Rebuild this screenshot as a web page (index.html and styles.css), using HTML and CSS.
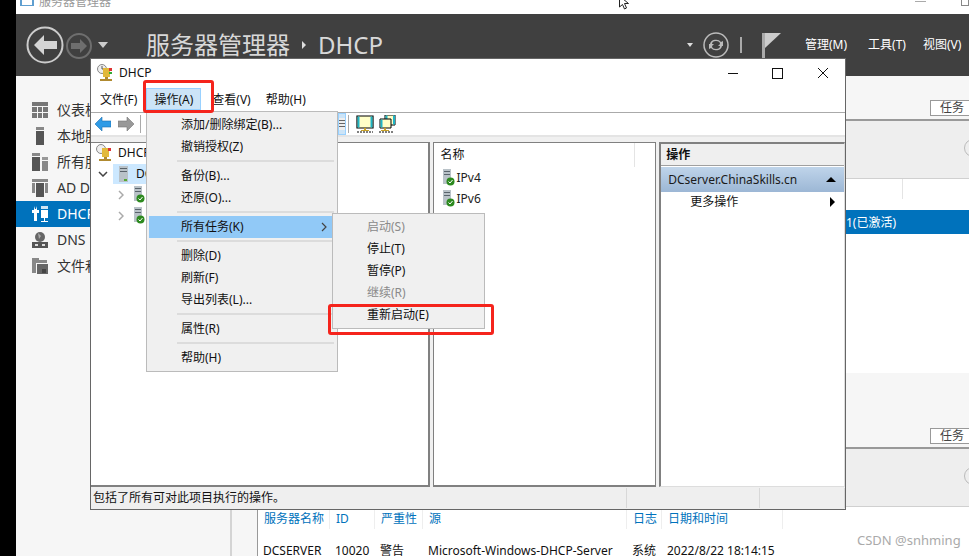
FILE: index.html
```html
<!DOCTYPE html>
<html lang="zh">
<head>
    <meta charset="UTF-8">
    <title>服务器管理器</title>
    <link rel="stylesheet" href="styles.css">
</head>
<body>
    <div class="screen">
        <div class="titlebar">
            <svg class="app-icon" width="16" height="14" viewBox="0 0 16 14"><path d="M1 0h14v10H1z" fill="#5f9fd0"/><path d="M3 3h10v6H3z" fill="#fff"/><path d="M5 1h6v3H5z" fill="#33556f"/></svg>
            <span class="app-name">服务器管理器</span>
            <svg class="cursor" width="14" height="11" viewBox="0 0 14 11"><path d="M1.5-4v11l3-2.5 2 4.5 2-1-2-4.5h4z" fill="#fff" stroke="#222"/></svg>
            <span class="min-line"></span>
            <span class="max-corner"></span>
        </div>

        <header class="header">
            <svg class="nav-back" width="38" height="38" viewBox="0 0 38 38"><circle cx="19" cy="19" r="17.5" fill="none" stroke="#ccc" stroke-width="2"/><path d="M8 19l10-10v6h13v8H18v6z" fill="#d4d4d4"/></svg>
            <svg class="nav-forward" width="26" height="26" viewBox="0 0 26 26"><circle cx="13" cy="13" r="12" fill="none" stroke="#6e6e6e" stroke-width="2"/><path d="M21 13l-7-7v4H5v6h9v4z" fill="#6e6e6e"/></svg>
            <span class="nav-drop"></span>
            <div class="crumb">服务器管理器<span class="crumb-sep"></span>DHCP</div>
            <span class="head-drop"></span>
            <svg class="refresh" width="26" height="26" viewBox="0 0 26 26"><circle cx="13" cy="13" r="12" fill="none" stroke="#bbb" stroke-width="1.5"/><path d="M7 12a6 5 0 0 1 11-2l2-1v5h-5l2-2a4 3 0 0 0-8 0zM19 14a6 5 0 0 1-11 2l-2 1v-5h5l-2 2a4 3 0 0 0 8 0z" fill="#bbb"/></svg>
            <span class="head-bar"></span>
            <svg class="flag" width="19" height="25" viewBox="0 0 19 25"><path d="M0 0h3v25H0z" fill="#aaa"/><path d="M3 0h16L3 15z" fill="#ccc"/></svg>
            <nav class="head-menu">
                <span>管理(M)</span>
                <span>工具(T)</span>
                <span>视图(V)</span>
            </nav>
        </header>

        <div class="main">
            <aside class="sidebar">
                <div class="side-row">
                    <svg width="16" height="16" viewBox="0 0 16 16"><path d="M0 0h16v4H0zM0 5h5v5H0zM6 5h4v5H6zM11 5h5v5h-5zM0 11h5v5H0zM6 11h4v5H6zM11 11h5v5h-5z" fill="#777"/></svg>
                    <span>仪表板</span>
                </div>
                <div class="side-row">
                    <svg width="16" height="18" viewBox="0 0 16 18"><path d="M4 0h8v3H4z" fill="#888"/><path d="M4 4h8v14H4z" fill="#555"/></svg>
                    <span>本地服务器</span>
                </div>
                <div class="side-row">
                    <svg width="16" height="18" viewBox="0 0 16 18"><path d="M0 0h8v3H0z" fill="#888"/><path d="M0 4h8v14H0z" fill="#555"/><path d="M10 4h6v3h-6z" fill="#999"/><path d="M10 8h6v10h-6z" fill="#888"/></svg>
                    <span>所有服务器</span>
                </div>
                <div class="side-row">
                    <svg width="16" height="18" viewBox="0 0 16 18"><path d="M0 0h16v3H0zM0 4h3v10H0zM13 4h3v10h-3z" fill="#888"/><path d="M4 4h8v14H4z" fill="#555"/></svg>
                    <span>AD DS</span>
                </div>
                <div class="side-row active">
                    <svg width="16" height="18" viewBox="0 0 16 18"><path d="M2 1v4H0v3h2v8h3V8h2V5H5V1L4 4H3z" fill="#fff"/><path d="M9 1h7v3H9z" fill="#cfe4f3"/><path d="M9 5h7v8H9z" fill="#fff"/><path d="M12 13h1v3h3v1H9v-1h3z" fill="#fff"/></svg>
                    <span>DHCP</span>
                </div>
                <div class="side-row">
                    <svg width="16" height="16" viewBox="0 0 16 16"><circle cx="8" cy="5" r="5" fill="#666"/><path d="M6 1l3 3-2 3z" fill="#aaa"/><path d="M0 10h16v6H0z" fill="#555"/><path d="M3 12h3v2H3zM10 12h3v2h-3z" fill="#ddd"/></svg>
                    <span>DNS</span>
                </div>
                <div class="side-row">
                    <svg width="16" height="16" viewBox="0 0 16 16"><path d="M0 0h7v2h8v3H4v10H0z" fill="#888"/><path d="M5 6h11v10H5z" fill="#666"/><path d="M10 11h4v4h-4z" fill="#444"/></svg>
                    <span>文件和存储服务</span>
                </div>
            </aside>

            <section class="content">
                <div class="group-head"><span class="task-btn">任务</span></div>
                <div class="filter-bar"><span class="round-btn"></span></div>
                <div class="role-list">
                    <span class="col-line"></span>
                    <div class="role-row">1(已激活)</div>
                </div>
                <div class="group-head second"><span class="task-btn">任务</span></div>
                <div class="filter-bar short"><span class="round-btn"></span></div>
                <div class="events">
                    <div class="event-row event-head">
                        <span>服务器名称</span><span>ID</span><span>严重性</span><span>源</span><span>日志</span><span class="sorted">日期和时间</span>
                    </div>
                    <div class="event-row">
                        <span>DCSERVER</span><span>10020</span><span>警告</span><span>Microsoft-Windows-DHCP-Server</span><span>系统</span><span>2022/8/22 18:14:15</span>
                    </div>
                </div>
            </section>
        </div>
    </div>

    <div class="window">
        <div class="win-title">
            <svg width="16" height="18" viewBox="0 0 16 18"><circle cx="5" cy="5" r="4.5" fill="#eee" stroke="#888"/><path d="M5 2v3h2" fill="none" stroke="#555"/><path d="M6 4h7v9H6z" fill="#e2b93b"/><path d="M12 4h3v3h-3z" fill="#d33"/><path d="M12 8h3v2h-3z" fill="#3a3"/><path d="M8 13h3v2h4v2H3v-2h5z" fill="#b08a30"/></svg>
            <span class="win-name">DHCP</span>
            <div class="win-btns">
                <span class="win-min"></span>
                <span class="win-max"></span>
                <svg width="12" height="12" viewBox="0 0 12 12"><path d="M1 1l10 10M11 1L1 11" stroke="#111" fill="none"/></svg>
            </div>
        </div>
        <div class="menubar">
            <span class="menu-label">文件(F)</span>
            <span class="menu-label open">操作(A)</span>
            <span class="menu-label">查看(V)</span>
            <span class="menu-label">帮助(H)</span>
        </div>
        <div class="toolbar">
            <svg width="16" height="14" viewBox="0 0 16 14"><path d="M0 7l7-7v4h9v6H7v4z" fill="#2f9be6" stroke="#1b6fb0" stroke-width=".6"/></svg>
            <svg class="tool-fwd" width="16" height="14" viewBox="0 0 16 14"><path d="M16 7L9 0v4H0v6h9v4z" fill="#999" stroke="#777" stroke-width=".6"/></svg>
            <span class="tool-sep"></span>
            <span class="tool-spacer"></span>
            <span class="tool-on">
                <svg width="6" height="12" viewBox="0 0 6 12"><path d="M0 0h6v12H0z" fill="#eee"/><path d="M0 2h6v1H0zM0 5h6v1H0zM0 8h6v1H0z" fill="#666"/></svg>
            </span>
            <span class="tool-sep near"></span>
            <svg class="tool-screen" width="18" height="18" viewBox="0 0 18 18"><path d="M1 1h16v12H1z" fill="#ffffc8" stroke="#000" stroke-width="1.2"/><path d="M1.500 1.500h2v11h-2zM14.500 1.500h2v11h-2z" fill="#1fb5c8"/><path d="M8 13h2v2h3v1H5v-1h3z" fill="#c9a227"/><path d="M1 17h16" stroke="#000" stroke-dasharray="2 1"/></svg>
            <svg class="tool-screen2" width="17" height="18" viewBox="0 0 17 18"><path d="M6 0h10v10H6z" fill="#ffffc8" stroke="#000"/><path d="M6.500 .5h2v9h-2zM14 .5h2v9h-2z" fill="#1fb5c8"/><path d="M1 4h11v9H1z" fill="#ffffc8" stroke="#000"/><path d="M1.500 4.500h2v8h-2z" fill="#1fb5c8"/><path d="M5 13h2v2h3v1H2v-1h3z" fill="#c9a227"/><path d="M0 17h14" stroke="#000" stroke-dasharray="2 1"/></svg>
        </div>
        <div class="win-body">
            <div class="pane tree">
                <div class="tree-row">
                    <svg width="16" height="18" viewBox="0 0 16 18"><circle cx="5" cy="5" r="4.500" fill="#eee" stroke="#888"/><path d="M6 4h7v9H6z" fill="#e2b93b"/><path d="M12 4h3v3h-3z" fill="#d33"/><path d="M8 13h3v2h4v2H3v-2h5z" fill="#b08a30"/></svg>
                    <span>DHCP</span>
                </div>
                <div class="tree-row level1">
                    <svg class="twisty" width="10" height="6" viewBox="0 0 10 6"><path d="M1 1l4 4 4-4" fill="none" stroke="#444" stroke-width="1.500"/></svg>
                    <span class="tree-sel">
                        <svg width="9" height="16" viewBox="0 0 9 16"><path d="M0 0h9v16H0z" fill="#b9c2c8"/><path d="M1 2h7v1H1zM1 5h7v1H1z" fill="#59636b"/><path d="M5 13h3v2H5z" fill="#5a3"/></svg>
                        <span>DCserver.ChinaSkills.cn</span>
                    </span>
                </div>
                <div class="tree-row level2">
                    <svg class="twisty" width="6" height="10" viewBox="0 0 6 10"><path d="M1 1l4 4-4 4" fill="none" stroke="#aaa" stroke-width="1.500"/></svg>
                    <svg class="srv" width="12" height="17" viewBox="0 0 12 17"><path d="M0 0h8v15H0z" fill="#b9c2c8"/><path d="M1 2h6v1H1zM1 5h6v1H1z" fill="#59636b"/><circle cx="6.500" cy="12.500" r="4" fill="#2d8a1f"/><path d="M4.500 12.500l1.500 1.500 2.500-3" fill="none" stroke="#fff"/></svg>
                    <span>IPv4</span>
                </div>
                <div class="tree-row level2">
                    <svg class="twisty" width="6" height="10" viewBox="0 0 6 10"><path d="M1 1l4 4-4 4" fill="none" stroke="#aaa" stroke-width="1.500"/></svg>
                    <svg class="srv" width="12" height="17" viewBox="0 0 12 17"><path d="M0 0h8v15H0z" fill="#b9c2c8"/><path d="M1 2h6v1H1zM1 5h6v1H1z" fill="#59636b"/><circle cx="6.500" cy="12.500" r="4" fill="#2d8a1f"/><path d="M4.500 12.500l1.500 1.500 2.500-3" fill="none" stroke="#fff"/></svg>
                    <span>IPv6</span>
                </div>
            </div>
            <div class="pane names">
                <div class="names-head"><span>名称</span></div>
                <div class="name-row">
                    <svg width="12" height="17" viewBox="0 0 12 17"><path d="M0 0h8v15H0z" fill="#b9c2c8"/><path d="M1 2h6v1H1zM1 5h6v1H1z" fill="#59636b"/><circle cx="7.500" cy="12.500" r="4" fill="#2d8a1f"/><path d="M5.500 12.500l1.500 1.500 2.500-3" fill="none" stroke="#fff"/></svg>
                    <span>IPv4</span>
                </div>
                <div class="name-row">
                    <svg width="12" height="17" viewBox="0 0 12 17"><path d="M0 0h8v15H0z" fill="#b9c2c8"/><path d="M1 2h6v1H1zM1 5h6v1H1z" fill="#59636b"/><circle cx="7.500" cy="12.500" r="4" fill="#2d8a1f"/><path d="M5.500 12.500l1.500 1.500 2.500-3" fill="none" stroke="#fff"/></svg>
                    <span>IPv6</span>
                </div>
            </div>
            <div class="pane actions">
                <div class="act-title">操作</div>
                <div class="act-head"><span>DCserver.ChinaSkills.cn</span><span class="tri-up"></span></div>
                <div class="act-item"><span>更多操作</span><span class="tri-right"></span></div>
            </div>
        </div>
        <div class="statusbar">
            <span class="status-main">包括了所有可对此项目执行的操作。</span>
            <span class="status-cell wide"></span>
            <span class="status-cell"></span>
        </div>

        <div class="menu">
            <div class="menu-item">添加/删除绑定(B)...</div>
            <div class="menu-item">撤销授权(Z)</div>
            <div class="menu-sep"></div>
            <div class="menu-item">备份(B)...</div>
            <div class="menu-item">还原(O)...</div>
            <div class="menu-sep"></div>
            <div class="menu-item hot">所有任务(K)
                <svg class="more" width="6" height="10" viewBox="0 0 6 10"><path d="M1 1l4 4-4 4" fill="none" stroke="#444" stroke-width="1.200"/></svg>
            </div>
            <div class="menu-sep"></div>
            <div class="menu-item">删除(D)</div>
            <div class="menu-item">刷新(F)</div>
            <div class="menu-item">导出列表(L)...</div>
            <div class="menu-sep"></div>
            <div class="menu-item">属性(R)</div>
            <div class="menu-sep"></div>
            <div class="menu-item">帮助(H)</div>

            <div class="submenu">
                <div class="menu-item off">启动(S)</div>
                <div class="menu-item">停止(T)</div>
                <div class="menu-item">暂停(P)</div>
                <div class="menu-item off">继续(R)</div>
                <div class="menu-item">重新启动(E)</div>
            </div>
        </div>

        <div class="mark mark-menu"></div>
        <div class="mark mark-restart"></div>
    </div>

    <div class="watermark">CSDN @snhming</div>
</body>
</html>
```

FILE: styles.css
```css
html, body {
    margin: 0;
    height: 100%;
    overflow: hidden;
}

body {
    position: relative;
    background-color: #000;
    font-family: "Noto Sans", "Noto Sans CJK SC", sans-serif;
    font-size: 12px;
    line-height: 16px;
    color: #111;
}

svg {
    display: block;
    flex: none;
}

.screen {
    display: flex;
    flex-direction: column;
    height: 556px;
    margin-left: 16px;
    background-color: #fff;
}

/* top strip, cropped by the screenshot */
.titlebar {
    display: flex;
    align-items: flex-start;
    height: 14px;
    overflow: hidden;
    flex: none;
}

.app-icon {
    margin: -4px 0 0 3px;
}

.app-name {
    margin: -6px 0 0 4px;
    width: 582px;
    color: #999;
    font-size: 12px;
}

.cursor {
    margin-left: 0;
}

.min-line {
    width: 11px;
    height: 1px;
    margin: 1px 0 0 283px;
    background-color: #aaa;
}

.max-corner {
    width: 6px;
    height: 5px;
    margin: -1px 0 0 35px;
    border: 1px solid #888;
}

.header {
    display: flex;
    align-items: center;
    height: 62px;
    flex: none;
    background-color: #404040;
}

.nav-back {
    margin: -1px 0 0 10px;
}

.nav-forward {
    margin: 1px 0 0 2px;
}

.nav-drop {
    margin: 0 0 0 6px;
    border-left: 5px solid transparent;
    border-right: 5px solid transparent;
    border-top: 6px solid #ccc;
}

.crumb {
    display: flex;
    align-items: center;
    margin-left: 38px;
    width: 538px;
    font-size: 24px;
    line-height: 34px;
    color: #d8d8d8;
}

.crumb-sep {
    margin: 0 12px 0 12px;
    border-top: 4px solid transparent;
    border-bottom: 4px solid transparent;
    border-left: 4px solid #ddd;
}

.head-drop {
    margin-left: 3px;
    border-left: 3px solid transparent;
    border-right: 3px solid transparent;
    border-top: 4px solid #ddd;
}

.refresh {
    margin-left: 10px;
}

.head-bar {
    width: 2px;
    height: 16px;
    margin-left: 11px;
    background-color: #aaa;
}

.flag {
    margin-left: 20px;
}

.head-menu {
    display: flex;
    gap: 21px;
    margin-left: 24px;
    color: #fff;
    white-space: nowrap;
}

.head-menu span:last-child {
    margin-left: -4px;
}

.main {
    display: flex;
    flex: 1;
    min-height: 0;
}

.sidebar {
    width: 214px;
    padding-top: 21px;
    flex: none;
    background-color: #f6f6f6;
    border-right: 2px solid #d4d4d4;
}

.side-row {
    display: flex;
    align-items: center;
    gap: 9px;
    height: 26px;
    padding-left: 16px;
    font-size: 14px;
    color: #333;
    white-space: nowrap;
}

.side-row.active {
    background-color: #0072bc;
    color: #fff;
}

.content {
    display: flex;
    flex-direction: column;
    flex: 1;
    min-width: 0;
    padding-left: 25px;
    background-color: #f6f6f6;
}

.group-head {
    display: flex;
    justify-content: flex-end;
    align-items: flex-end;
    height: 45px;
    flex: none;
    padding-bottom: 3px;
    box-sizing: border-box;
    border-bottom: 2px solid #999;
    border-left: 1px solid #999;
}

.group-head.second {
    height: 76px;
}

.task-btn {
    width: 29px;
    height: 14px;
    padding-left: 9px;
    border: 1px solid #999;
    border-right: none;
    background-color: #fff;
    color: #444;
    line-height: 14px;
}

.filter-bar {
    display: flex;
    justify-content: flex-end;
    align-items: center;
    height: 57px;
    flex: none;
    border-bottom: 1px solid #d0d0d0;
    border-left: 1px solid #999;
    background-color: #eee;
    overflow: hidden;
}

.round-btn {
    width: 16px;
    height: 16px;
    margin: -4px -13px 0 0;
    border: 1px solid #bbb;
    border-radius: 50%;
    flex: none;
}

.role-list {
    position: relative;
    height: 194px;
    flex: none;
    padding-top: 31px;
    box-sizing: border-box;
    border-left: 1px solid #999;
    background-color: #fff;
}

.col-line {
    position: absolute;
    top: 0;
    right: 66px;
    width: 1px;
    height: 20px;
    background-color: #e4e4e4;
}

.role-row {
    height: 24px;
    padding-left: 588px;
    line-height: 25px;
    background-color: #0072bc;
    color: #fff;
    white-space: nowrap;
}

.events {
    flex: 1;
    padding-top: 6px;
    border-left: 1px solid #999;
    background-color: #fff;
}

.event-row {
    display: grid;
    grid-template-columns: 72px 45px 48px 204px 35px 121px;
    align-content: start;
    height: 32px;
    line-height: 12px;
    white-space: nowrap;
}

.event-row span {
    padding-left: 5px;
}

.event-head {
    color: #0072bc;
}

.event-head span {
    position: relative;
    margin-top: -4px;
    padding: 4px 0 4px 6px;
    border-right: 1px solid #eee;
}

.sorted::before {
    content: "";
    position: absolute;
    left: 59px;
    top: -5px;
    border-left: 2px solid transparent;
    border-right: 2px solid transparent;
    border-top: 3px solid #0072bc;
}

/* DHCP window */
.window {
    position: absolute;
    left: 90px;
    top: 58px;
    display: flex;
    flex-direction: column;
    width: 754px;
    height: 450px;
    border: 1px solid #666;
    background-color: #fff;
}

.win-title {
    display: flex;
    align-items: center;
    height: 28px;
    flex: none;
    padding-left: 6px;
}

.win-name {
    margin-left: 6px;
}

.win-btns {
    display: flex;
    align-items: center;
    gap: 34px;
    margin-left: auto;
    margin-right: 16px;
}

.win-min {
    width: 10px;
    height: 1px;
    background-color: #111;
}

.win-max {
    width: 9px;
    height: 9px;
    border: 1px solid #111;
}

.menubar {
    display: flex;
    align-items: center;
    height: 24px;
    flex: none;
    padding: 0 0 1px 1px;
    border-bottom: 1px solid #aaa;
}

.menu-label {
    padding: 0 7px;
    height: 22px;
    line-height: 22px;
    margin-right: -1px;
    border: 1px solid transparent;
    box-sizing: border-box;
    white-space: nowrap;
}

.menu-label.open {
    margin: 0 3px 0 2px;
    background-color: #cce4f7;
    border-color: #99d1ff;
}

.toolbar {
    display: flex;
    align-items: center;
    height: 22px;
    flex: none;
    padding-left: 4px;
    border-bottom: 2px solid #e4e4e4;
}

.tool-fwd {
    margin-left: 7px;
}

.tool-sep {
    width: 1px;
    height: 18px;
    margin-left: 6px;
    background-color: #aaa;
}

.tool-sep.near {
    margin-left: 2px;
}

.tool-spacer {
    width: 197px;
}

.tool-on {
    display: flex;
    align-items: center;
    width: 6px;
    height: 20px;
    border: 1px solid #99d1ff;
    background-color: #cce4f7;
}

.tool-screen {
    margin-left: 7px;
}

.tool-screen2 {
    margin-left: 5px;
}

.win-body {
    display: flex;
    gap: 3px;
    flex: 1;
    min-height: 0;
    padding-top: 5px;
    background-color: #f0f0f0;
}

.pane {
    border: 1px solid #808080;
    border-bottom-width: 2px;
    background-color: #fff;
    box-sizing: border-box;
    overflow: hidden;
}

.tree {
    width: 339px;
    border-left: none;
    border-right-width: 2px;
}

.tree-row {
    display: flex;
    align-items: center;
    height: 21px;
    padding-left: 5px;
    white-space: nowrap;
}

.tree-row:first-child {
    height: 20px;
}

.tree-row > span {
    margin-left: 6px;
}

.level1 {
    padding-left: 7px;
}

.tree-row > .tree-sel {
    display: flex;
    align-items: center;
    gap: 8px;
    height: 20px;
    margin-left: 5px;
    padding: 0 6px;
    background-color: #cce8ff;
}

.level2 {
    padding-left: 27px;
}

.srv {
    margin-left: 10px;
}

.names {
    width: 224px;
    border-left-width: 1px;
    border-color: #808080;
}

.names-head {
    height: 24px;
    padding: 4px 0 0 7px;
    box-sizing: border-box;
    border-right: 1px solid #e4e4e4;
    width: 201px;
    line-height: 16px;
}

.name-row {
    display: flex;
    align-items: center;
    gap: 2px;
    height: 21px;
    padding-left: 9px;
    color: #222;
}

.actions {
    width: 186px;
    border: 2px solid #808080;
    border-right: 1px solid #ddd;
    border-bottom: 1px solid #ddd;
}

.act-title {
    height: 21px;
    line-height: 21px;
    padding-left: 5px;
    background-color: #efefef;
    border-bottom: 1px solid #a0a0a0;
    font-weight: 700;
}

.act-head {
    display: flex;
    justify-content: space-between;
    align-items: center;
    height: 25px;
    margin-top: 1px;
    padding: 0 8px 0 7px;
    background: linear-gradient(#bfd4ea, #9cb7d5);
    color: #1a1a1a;
}

.tri-up {
    border-left: 5px solid transparent;
    border-right: 5px solid transparent;
    border-bottom: 5px solid #000;
}

.act-item {
    display: flex;
    justify-content: space-between;
    align-items: center;
    height: 20px;
    padding: 0 9px 0 29px;
}

.tri-right {
    border-top: 5px solid transparent;
    border-bottom: 5px solid transparent;
    border-left: 5px solid #000;
}

.statusbar {
    display: flex;
    align-items: stretch;
    height: 22px;
    flex: none;
    background-color: #efefef;
    line-height: 22px;
}

.status-main {
    width: 534px;
    padding-left: 2px;
    border-right: 1px solid #d8d8d8;
    margin: 1px 0;
    line-height: 20px;
}

.status-cell {
    width: 84px;
    margin: 1px 0;
    border-right: 1px solid #d8d8d8;
}

.status-cell.wide {
    width: 132px;
}

/* popup menus */
.menu {
    position: absolute;
    left: 55px;
    top: 52px;
    width: 186px;
    padding: 2px;
    border: 1px solid #bbb;
    background-color: #f0f0f0;
}

.menu-item {
    position: relative;
    height: 22px;
    padding-left: 32px;
    line-height: 22px;
    white-space: nowrap;
    color: #111;
}

.menu-item.hot {
    background-color: #91c9f7;
}

.menu-item.off {
    color: #8a8a8a;
}

.more {
    position: absolute;
    right: 8px;
    top: 6px;
}

.menu-sep {
    height: 2px;
    margin: 2px 1px 3px 28px;
    background-color: #dcdcdc;
}

.submenu {
    position: absolute;
    left: 185px;
    top: 101px;
    width: 149px;
    padding: 2px 1px;
    border: 1px solid #bbb;
    background-color: #f0f0f0;
}

.submenu .menu-item {
    padding-left: 33px;
}

/* red annotation boxes */
.mark {
    position: absolute;
    border: 3px solid #f5241c;
    border-radius: 3px;
    box-sizing: border-box;
}

.mark-menu {
    left: 52px;
    top: 21px;
    width: 71px;
    height: 33px;
}

.mark-restart {
    left: 237px;
    top: 245px;
    width: 166px;
    height: 31px;
}

.watermark {
    position: absolute;
    left: 857px;
    top: 532px;
    font-size: 13px;
    color: #aaa;
    white-space: nowrap;
}
```
